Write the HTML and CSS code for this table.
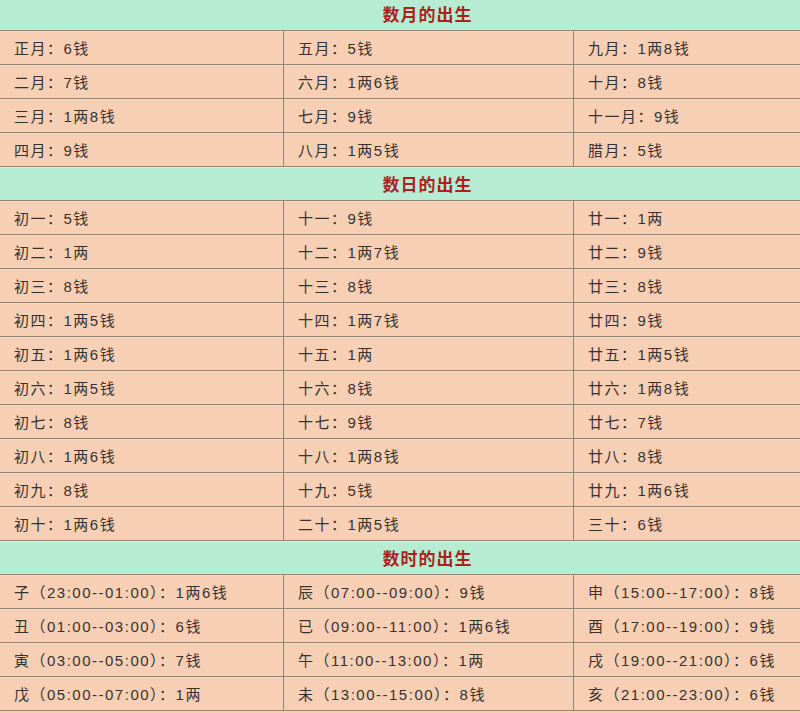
FILE: index.html
```html
<!DOCTYPE html>
<html lang="zh">
<head>
<meta charset="utf-8">
<link rel="stylesheet" href="styles.css">
</head>
<body>
<div class="wrap">
<table class="chart">
<colgroup><col class="c1"><col class="c2"><col class="c3"></colgroup>
<tr class="head"><td colspan="3">数月的出生</td></tr>
<tr><td>正月：6钱</td><td>五月：5钱</td><td>九月：1两8钱</td></tr>
<tr><td>二月：7钱</td><td>六月：1两6钱</td><td>十月：8钱</td></tr>
<tr><td>三月：1两8钱</td><td>七月：9钱</td><td>十一月：9钱</td></tr>
<tr><td>四月：9钱</td><td>八月：1两5钱</td><td>腊月：5钱</td></tr>
<tr class="head"><td colspan="3">数日的出生</td></tr>
<tr><td>初一：5钱</td><td>十一：9钱</td><td>廿一：1两</td></tr>
<tr><td>初二：1两</td><td>十二：1两7钱</td><td>廿二：9钱</td></tr>
<tr><td>初三：8钱</td><td>十三：8钱</td><td>廿三：8钱</td></tr>
<tr><td>初四：1两5钱</td><td>十四：1两7钱</td><td>廿四：9钱</td></tr>
<tr><td>初五：1两6钱</td><td>十五：1两</td><td>廿五：1两5钱</td></tr>
<tr><td>初六：1两5钱</td><td>十六：8钱</td><td>廿六：1两8钱</td></tr>
<tr><td>初七：8钱</td><td>十七：9钱</td><td>廿七：7钱</td></tr>
<tr><td>初八：1两6钱</td><td>十八：1两8钱</td><td>廿八：8钱</td></tr>
<tr><td>初九：8钱</td><td>十九：5钱</td><td>廿九：1两6钱</td></tr>
<tr><td>初十：1两6钱</td><td>二十：1两5钱</td><td>三十：6钱</td></tr>
<tr class="head"><td colspan="3">数时的出生</td></tr>
<tr><td>子（23:00--01:00）：1两6钱</td><td>辰（07:00--09:00）：9钱</td><td>申（15:00--17:00）：8钱</td></tr>
<tr><td>丑（01:00--03:00）：6钱</td><td>已（09:00--11:00）：1两6钱</td><td>酉（17:00--19:00）：9钱</td></tr>
<tr><td>寅（03:00--05:00）：7钱</td><td>午（11:00--13:00）：1两</td><td>戌（19:00--21:00）：6钱</td></tr>
<tr><td>戊（05:00--07:00）：1两</td><td>未（13:00--15:00）：8钱</td><td>亥（21:00--23:00）：6钱</td></tr>
</table>
</div>
</body>
</html>
```
FILE: styles.css
```css
html, body {
  margin: 0;
  padding: 0;
  background: #f7cfb4;
  overflow: hidden;
}
.wrap {
  width: 800px;
  height: 713px;
  overflow: hidden;
}
.chart {
  margin-top: -4px;
  margin-left: -1px;
  width: 856px;
  border-collapse: collapse;
  table-layout: fixed;
  font-family: "Liberation Sans", "Noto Sans CJK SC", sans-serif;
  font-size: 15px;
  letter-spacing: 1.5px;
  color: #363230;
}
.c1 { width: 284px; }
.c2 { width: 290px; }
.c3 { width: 282px; }
.chart td {
  height: 33px;
  padding: 0 0 0 14px;
  border: 1px solid #948470;
  background: #f7cfb4;
  box-shadow: inset 0 1px 0 #f0d9c6;
  vertical-align: middle;
  white-space: nowrap;
}
.chart .head td {
  background: #b5ecd2;
  box-shadow: inset 0 1px 0 #d5f2e4;
  text-align: center;
  padding: 0;
  font-size: 17px;
  letter-spacing: 1px;
  font-weight: bold;
  color: #ad1f1f;
}
```
